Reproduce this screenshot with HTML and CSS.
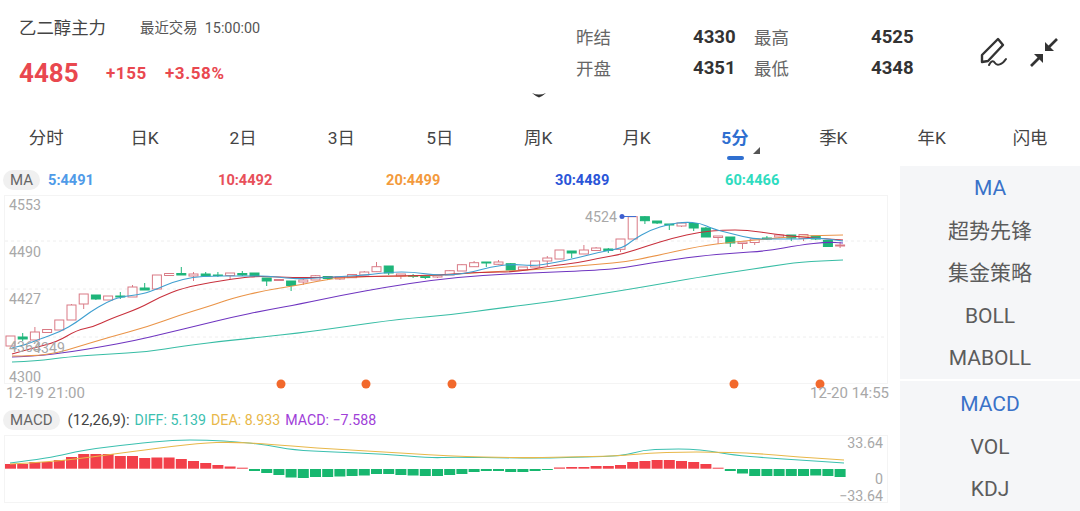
FILE: index.html
```html
<!DOCTYPE html>
<html lang="zh-CN">
<head>
    <meta charset="UTF-8">
    <meta name="viewport" content="width=device-width, initial-scale=1.0">
    <title>乙二醇主力</title>
    <link rel="stylesheet" href="styles.css">
</head>
<body>

<div class="page">
    <div class="quote-head">
        <div class="quote-main">
            <div class="title-row">
                <span class="name">乙二醇主力</span>
                <span class="trade-time">最近交易&nbsp;&nbsp;15:00:00</span>
            </div>
            <div class="price-row">
                <span class="price">4485</span>
                <span class="change">+155</span>
                <span class="change">+3.58%</span>
            </div>
        </div>
        <div class="stats">
            <span class="stat-label">昨结</span><span class="stat-value">4330</span>
            <span class="stat-label">最高</span><span class="stat-value">4525</span>
            <span class="stat-label">开盘</span><span class="stat-value">4351</span>
            <span class="stat-label">最低</span><span class="stat-value">4348</span>
        </div>
        <div class="head-icons">
            <svg class="icon-pen" width="30" height="32" viewBox="0 0 30 32" fill="none" stroke="#333" stroke-width="2.4" stroke-linejoin="round" stroke-linecap="round">
                <path d="M3 18 L19 2 L24 8 L9 24 L3 25 Z"/>
                <path d="M10 28 C12 24 14 23 16 26 C18 29 23 28 27 22" stroke-width="2"/>
            </svg>
            <svg class="icon-shrink" width="30" height="32" viewBox="0 0 30 32" fill="#333" stroke="#333" stroke-width="2.6">
                <path d="M27 2 L18 11" fill="none"/>
                <path d="M15 5 L15 14 L24 14 Z" stroke="none"/>
                <path d="M1 29 L9 21" fill="none"/>
                <path d="M4 17 L13 17 L13 26 Z" stroke="none"/>
            </svg>
        </div>
    </div>

    <div class="handle">
        <svg width="16" height="6" viewBox="0 0 16 6" fill="#333"><path d="M1 0 Q8 3 15 0 Q11 3.5 8 4.5 Q5 3.5 1 0 Z"/></svg>
    </div>

    <div class="tabs">
        <span class="tab">分时</span>
        <span class="tab">日K</span>
        <span class="tab">2日</span>
        <span class="tab">3日</span>
        <span class="tab">5日</span>
        <span class="tab">周K</span>
        <span class="tab">月K</span>
        <span class="tab active">5分</span>
        <span class="tab">季K</span>
        <span class="tab">年K</span>
        <span class="tab">闪电</span>
    </div>

    <div class="workspace">
        <div class="charts">
            <div class="legend ma-legend">
                <span class="pill">MA</span>
                <span class="ma-val c-ma5">5:4491</span>
                <span class="ma-val c-ma10">10:4492</span>
                <span class="ma-val c-ma20">20:4499</span>
                <span class="ma-val c-ma30">30:4489</span>
                <span class="ma-val c-ma60">60:4466</span>
            </div>

            <!-- viewBox uses page coordinates so the numbers line up with the screenshot -->
            <svg class="chart main-chart" viewBox="0 195 900 208" width="900" height="208">
                <rect class="frame" x="4.5" y="195.5" width="883" height="188"/>
                <line class="grid" x1="5" x2="887" y1="241" y2="241"/>
                <line class="grid" x1="5" x2="887" y1="289" y2="289"/>
                <line class="grid" x1="5" x2="887" y1="337" y2="337"/>
                <g id="candles"></g>
                <polyline class="ln ma60" points="12,362 37,361 67,357 107,354 147,352 183,346 233,340 300,333 343,327 400,319 450,315 500,308 550,302 600,294 643,287 700,277 733,272 773,266 800,262 843,260"/>
                <polyline class="ln ma30" points="12,357 37,356 70,352 100,347 133,341 167,333 200,325 233,317 267,310 300,304 343,295 387,287 433,280 483,275 533,273 600,270 623,268 650,263 700,256 733,253 767,251 800,245 827,242 843,243"/>
                <polyline class="ln ma20" points="12,356 33,356 57,353 77,347 110,337 147,327 180,315 210,306 233,298 267,290 300,285 333,278 383,276 433,276 483,272 533,270 600,264 625,262 650,257 700,246 733,242 767,239 800,236 843,235"/>
                <polyline class="ln ma10" points="12,354 33,348 57,342 77,330 93,327 110,319 140,308 160,297 183,288 213,282 240,278 260,276 300,278 333,277 400,276 440,275 483,272 517,272 550,266 577,263 600,258 623,254 647,246 673,238 700,232 723,230 747,230 773,234 800,237 843,240"/>
                <polyline class="ln ma5" points="12,348 25,345 37,340 60,332 77,322 90,312 107,302 120,297 143,294 157,289 173,282 193,277 213,276 233,276 253,276 267,276 287,278 300,279 333,277 367,275 390,272 413,272 433,275 453,275 473,272 490,267 513,264 533,266 553,263 577,258 600,252 623,248 633,240 650,230 670,224 685,222 700,223 713,229 733,234 753,239 773,239 800,239 820,238 843,241"/>
                <text class="axis" x="9" y="210">4553</text>
                <text class="axis" x="9" y="257">4490</text>
                <text class="axis" x="9" y="304">4427</text>
                <text class="axis" x="9" y="352">4363</text>
                <text class="axis" x="33" y="353">4349</text>
                <text class="axis" x="9" y="382">4300</text>
                <text class="axis" x="585" y="222">4524</text>
                <line class="high-line" x1="622" x2="636" y1="216.5" y2="216.5"/>
                <circle class="high-dot" cx="622" cy="216.5" r="2.5"/>
                <circle class="marker" cx="281" cy="384" r="4.5"/>
                <circle class="marker" cx="366" cy="384" r="4.5"/>
                <circle class="marker" cx="452" cy="384" r="4.5"/>
                <circle class="marker" cx="734" cy="384" r="4.5"/>
                <circle class="marker" cx="820" cy="384" r="4.5"/>
                <text class="axis date" x="6" y="398">12-19 21:00</text>
                <text class="axis date end" x="889" y="398">12-20 14:55</text>
            </svg>

            <div class="legend macd-legend">
                <span class="pill">MACD</span>
                <span class="macd-val c-param">(12,26,9):</span>
                <span class="macd-val c-diff">DIFF: 5.139</span>
                <span class="macd-val c-dea">DEA: 8.933</span>
                <span class="macd-val c-macd">MACD: −7.588</span>
            </div>

            <svg class="chart" viewBox="0 433 900 78" width="900" height="78">
                <rect class="frame" x="4.5" y="435.5" width="883" height="67"/>
                <g id="macd-bars"></g>
                <polyline class="ln diff" points="10,463 50,458 83,450 133,444 173,440 207,440 240,442 267,445 293,450 333,452 383,454 433,458 450,457 517,458 550,458 583,457 623,456 643,450 667,449 690,449 710,451 733,455 767,458 800,460 844,463"/>
                <polyline class="ln dea" points="10,464 50,462 100,456 143,450 200,443 233,442 267,444 317,448 367,451 450,456 517,458 567,457 617,456 650,453 683,452 710,452 750,453 800,457 844,460"/>
                <text class="axis end" x="883" y="448">33.64</text>
                <text class="axis end" x="883" y="484">0</text>
                <text class="axis end" x="883" y="501">−33.64</text>
            </svg>
        </div>

        <div class="side">
            <div class="side-group main-group">
                <span class="side-item active">MA</span>
                <span class="side-item">超势先锋</span>
                <span class="side-item">集金策略</span>
                <span class="side-item">BOLL</span>
                <span class="side-item">MABOLL</span>
            </div>
            <div class="side-group sub-group">
                <span class="side-item active">MACD</span>
                <span class="side-item">VOL</span>
                <span class="side-item">KDJ</span>
            </div>
        </div>
    </div>
</div>

<script src="chart.js"></script>
</body>
</html>
```

FILE: styles.css
```css
body {
    margin: 0;
    padding: 0;
    background-color: #ffffff;
    font-family: Roboto, "Noto Sans CJK SC", sans-serif;
    color: #444444;
}

.page {
    width: 1080px;
    height: 511px;
    overflow: hidden;
}

/* Top quote block */
.quote-head {
    display: flex;
    height: 90px;
}

.quote-main {
    width: 557px;
    padding-left: 19px;
}

.title-row {
    display: flex;
    align-items: center;
    height: 28px;
    margin-top: 12px;
}

.name {
    font-size: 17.4px;
    width: 121px;
}

.trade-time {
    font-size: 14.4px;
    color: #555555;
}

.price-row {
    display: flex;
    align-items: center;
    margin-top: 17px;
    height: 32px;
    color: #e9484f;
    font-weight: 700;
}

.price {
    font-size: 26px;
    width: 87px;
}

.change {
    font-size: 17px;
    letter-spacing: 0.6px;
    margin-right: 18px;
}

.stats {
    display: grid;
    grid-template-columns: 117px 61px 117px 61px;
    grid-auto-rows: 31px;
    align-items: center;
    width: 356px;
    padding-top: 21px;
}

.stat-label {
    font-size: 17.4px;
    color: #666666;
}

.stat-value {
    font-size: 18.6px;
    font-weight: 700;
    color: #333333;
}

.head-icons {
    display: flex;
    gap: 21px;
    padding: 37px 0 0 47px;
    height: 32px;
}

.handle {
    display: flex;
    justify-content: center;
    height: 27px;
    padding-top: 3px;
    box-sizing: border-box;
    margin-left: -2px;
}

/* Period tabs */
.tabs {
    display: grid;
    grid-template-columns: repeat(11, 98.4px);
    margin-left: -3px;
    height: 49px;
}

.tab {
    position: relative;
    text-align: center;
    font-size: 17.4px;
    line-height: 42px;
    color: #444444;
}

.tab.active {
    color: #2f6fd0;
    font-weight: 700;
}

.tab.active::before {
    content: "";
    position: absolute;
    left: 41px;
    top: 39px;
    width: 17px;
    height: 4px;
    border-radius: 2px;
    background-color: #2f6fd0;
}

.tab.active::after {
    content: "";
    position: absolute;
    left: 67px;
    top: 30px;
    border-style: solid;
    border-width: 0 0 7px 7px;
    border-color: transparent transparent #555555 transparent;
}

/* Charts and indicator list */
.workspace {
    display: flex;
    height: 345px;
}

.charts {
    width: 900px;
    flex-shrink: 0;
}

.chart {
    display: block;
    overflow: hidden;
}

.legend {
    display: flex;
    align-items: center;
    box-sizing: border-box;
}

.ma-legend {
    height: 29px;
    padding: 0 0 1px 3px;
}

.macd-legend {
    height: 30px;
    padding: 3px 0 0 3px;
}

.pill {
    background-color: #f0f0f0;
    border-radius: 10px;
    color: #666666;
    font-size: 15px;
    line-height: 20px;
    padding: 0 7px;
}

.ma-val {
    font-size: 14.6px;
    font-weight: 700;
}

.ma-legend .pill {
    margin-right: 8px;
}

.c-ma5 { color: #4f9be8; width: 170px; }
.c-ma10 { color: #e8505a; width: 168px; }
.c-ma20 { color: #f39a3c; width: 169px; }
.c-ma30 { color: #2a55d8; width: 170px; }
.c-ma60 { color: #2fdcc0; }

.macd-val {
    font-size: 14.2px;
    margin-right: 5px;
}

.macd-legend .pill {
    margin-right: 8px;
}

.macd-val.c-param { font-size: 15px; }
.c-param { color: #444444; }
.c-diff { color: #3cc0b0; }
.c-dea { color: #e8b84a; }
.c-macd { color: #a040d8; }

.axis {
    font-size: 14.2px;
    fill: #a8a8a8;
}

.axis.date {
    font-size: 15px;
}

.axis.end {
    text-anchor: end;
}

.frame {
    fill: none;
    stroke: #f4f4f4;
}

.grid {
    stroke: #eeeeee;
    stroke-dasharray: 3 3;
}

.ln {
    fill: none;
    stroke-width: 1.1;
    stroke-linejoin: round;
}

.ma5 { stroke: #3f9fd0; }
.ma10 { stroke: #c8303c; }
.ma20 { stroke: #ea9448; }
.ma30 { stroke: #6f35c0; }
.ma60 { stroke: #38bda5; }
.diff { stroke: #3cc0b0; }
.dea { stroke: #e8b84a; }

.candle-up {
    fill: #ffffff;
    stroke: #d97a85;
}

.candle-down {
    fill: #1eb57a;
    stroke: #1eb57a;
}

.wick-up { stroke: #d97a85; }
.wick-down { stroke: #1eb57a; }

.bar-up { fill: #f2404a; }
.bar-down { fill: #17b76f; }

.high-line { stroke: #3f6fd0; }
.high-dot { fill: #3f5fd0; }
.marker { fill: #f2692c; }

.side {
    flex: 1;
    display: flex;
    flex-direction: column;
    gap: 2px;
}

.side-group {
    display: flex;
    flex-direction: column;
    align-items: center;
    background-color: #f5f6f8;
    padding-top: 1px;
    flex: 1;
}

.main-group {
    flex: none;
    height: 212px;
}

.sub-group {
    padding-top: 2px;
}

.side-item {
    font-size: 21px;
    line-height: 42.5px;
    color: #5c5c5c;
}

.side-item.active {
    color: #3a72c8;
}
```

FILE: chart.js
```js
document.addEventListener("DOMContentLoaded", function () {
  const NS = "http://www.w3.org/2000/svg";
  const STEP = 12.2;
  const START = 10.5;

  // [open/close top, bottom, wick top, wick bottom, u = up / d = down]
  const candles = [
    [336,346,336,346,"u"],[337,339,333,341,"d"],[332,340,327,340,"u"],[329.5,332.5,329,333,"u"],
    [320,330,320,330,"u"],[305,320,304,320,"u"],[294,304,294,309,"u"],[295,299,295,300,"d"],
    [296,300,296,300,"u"],[296,297,292,299,"d"],[287,297,285,297,"u"],[288,290,283,290,"d"],
    [275,289,275,290,"u"],[273.5,275.5,273,276,"u"],[273.5,275,267,275,"d"],[274,276,272,281,"u"],
    [274,276,272,276,"d"],[275,275.5,272,277,"d"],[273,275.5,273,279,"u"],[273.5,275,271,276,"d"],
    [273,276,273,277,"d"],[278,281,278,286,"d"],[279.5,280.5,279,281,"u"],[281,285.5,281,291,"d"],
    [280,282,279,285,"u"],[275.7,280,275,280,"u"],[276.5,278.5,276,280,"d"],[277,279,277,280,"u"],
    [274.5,277.7,274,278,"u"],[272,275,271,275,"u"],[266.7,271.7,262,272,"u"],[266,273,266,275,"d"],
    [274,276,274,279,"u"],[275.5,276.5,274,278,"d"],[276,277.5,275,279,"d"],[275.5,277,275,278,"u"],
    [270.7,275,270,275,"u"],[264.7,271,264,271,"u"],[262.7,266.7,261,267,"u"],[262,263,262,267,"d"],
    [262,264.3,260,265,"u"],[263.7,270,263,270,"d"],[267,269.7,267,270,"u"],[261,267,261,267,"u"],
    [258,261,256,266,"u"],[250,259,250,259,"u"],[251,253,251,258,"d"],[250,254,245,254,"u"],
    [248,250.5,247,251,"u"],[249,250.5,248,253,"d"],[239,249.3,239,252,"u"],[216.7,239,216,239,"u"],
    [216.7,220.7,216,224,"d"],[221,223,221,224,"d"],[224,225,224,230,"d"],[223,226,222,227,"u"],
    [223.5,228,223,231,"d"],[228,237,227,237,"d"],[236,237.5,236,244,"u"],[237,243,237,247,"d"],
    [242,243.5,242,249,"u"],[239,242.5,239,245,"u"],[238,239,236,240,"d"],[235,237,234,238,"u"],
    [235,238,235,241,"d"],[234.5,238.5,234,241,"u"],[236,239,236,240,"d"],[240.5,246.5,240,247,"d"],
    [245,246,242,248,"u"]
  ];

  // histogram: positive = top of a red bar, negative = bottom of a green bar (page px)
  const bars = [
    464,464,462,462,460,457,454,454,454,456,456,458,457.5,457.5,459,461,463,465,466.5,467.7,
    -471,-473,-475,-477.5,-478,-477,-477,-476.5,-476,-475.5,-474,-474,-475,-475.5,-476,-476,
    -475,-474,-472,-471,-471,-472,-472,-471,-470,
    467.5,467,467,466,466,465,462,461,460,460,461,462,464,467.7,
    -471,-473.5,-476,-476,-476,-476,-476,-475.5,-476,-477,-477
  ].slice(0, 69);

  function addNode(parent, tag, attrs) {
    const node = document.createElementNS(NS, tag);
    Object.keys(attrs).forEach(function (key) {
      node.setAttribute(key, attrs[key]);
    });
    parent.appendChild(node);
    return node;
  }

  const candleGroup = document.getElementById("candles");
  candles.forEach(function (c, i) {
    const x = START + STEP * i;
    const kind = c[4] === "u" ? "up" : "down";
    addNode(candleGroup, "line", { class: "wick-" + kind, x1: x, x2: x, y1: c[2], y2: c[3] });
    addNode(candleGroup, "rect", {
      class: "candle-" + kind,
      x: x - 4.5,
      y: c[0],
      width: 9,
      height: c[1] - c[0]
    });
  });

  const zero = 468.7;
  const barGroup = document.getElementById("macd-bars");
  bars.forEach(function (val, i) {
    const x = START + STEP * i - 5.5;
    if (val > 0) {
      addNode(barGroup, "rect", { class: "bar-up", x: x, y: val, width: 11, height: zero - val });
    } else {
      addNode(barGroup, "rect", { class: "bar-down", x: x, y: 469, width: 11, height: -val - 469 });
    }
  });

  // Smooth the hand-read line points, curving through the midpoints
  document.querySelectorAll("polyline.ln").forEach(function (line) {
    const pts = line.getAttribute("points").split(" ").map(function (p) {
      return p.split(",").map(Number);
    });
    let d = "M" + pts[0].join(" ");
    for (let i = 1; i < pts.length - 1; i++) {
      const mx = (pts[i][0] + pts[i + 1][0]) / 2;
      const my = (pts[i][1] + pts[i + 1][1]) / 2;
      d += " Q" + pts[i].join(" ") + " " + mx + " " + my;
    }
    d += " L" + pts[pts.length - 1].join(" ");
    const path = addNode(line.parentNode, "path", { class: line.getAttribute("class"), d: d });
    line.parentNode.insertBefore(path, line);
    line.remove();
  });
});
```
